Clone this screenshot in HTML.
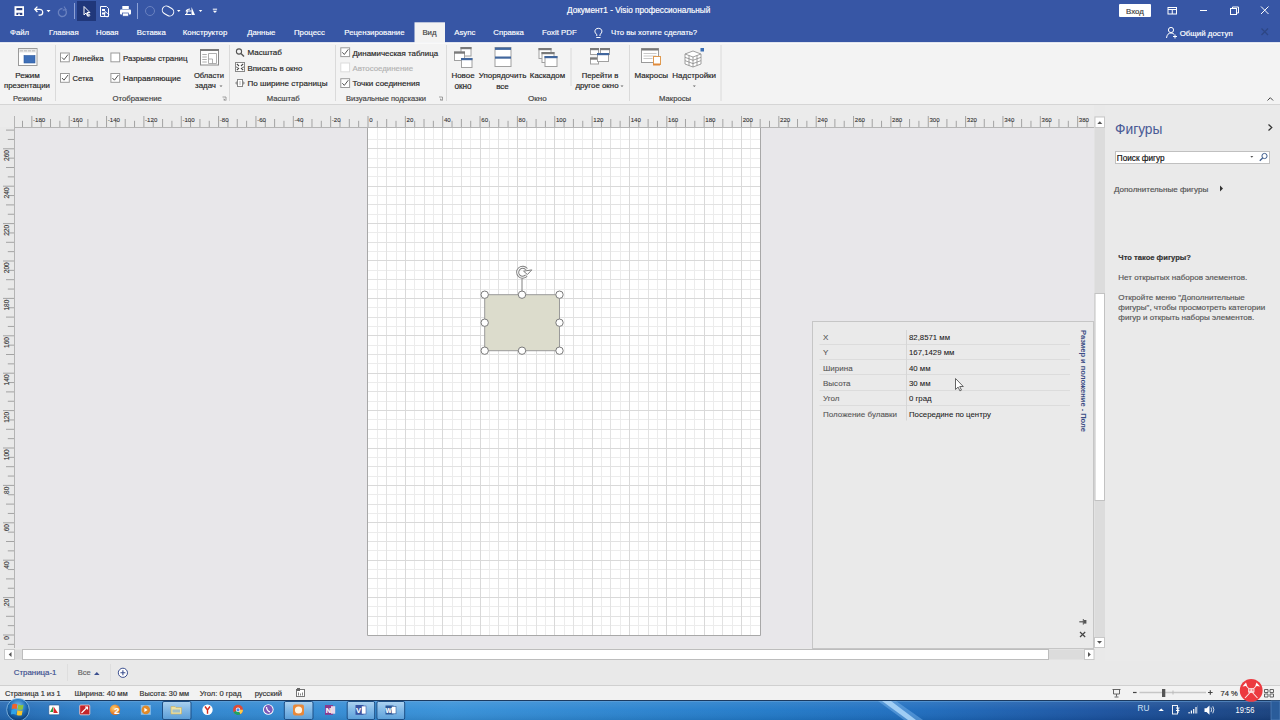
<!DOCTYPE html>
<html><head><meta charset="utf-8"><title>Visio</title>
<style>
html,body{margin:0;padding:0;width:1280px;height:720px;overflow:hidden;background:#e9e9e9;}
svg{display:block;font-family:"Liberation Sans", sans-serif;}
</style></head><body>
<svg width="1280" height="720" viewBox="0 0 1280 720">
<rect x="0" y="0" width="1280" height="42.5" fill="#3756a5" />
<rect x="414.5" y="22.3" width="30.5" height="20.5" fill="#f3f3f3" />
<rect x="0" y="42.5" width="1280" height="62" fill="#f3f3f3" />
<line x1="0" y1="104.5" x2="1280" y2="104.5" stroke="#d5d5d5" stroke-width="1" />
<rect x="0" y="105" width="1280" height="615" fill="#e9e9e9" />
<path d="M14.5 6.2 h9.5 v9.8 h-9.5 z" fill="#fff"/><rect x="16.4" y="8" width="5.9" height="2.2" fill="#2a3f80"/><rect x="16.4" y="12.8" width="5.9" height="2.2" fill="#2a3f80"/><rect x="18.2" y="13.6" width="1.6" height="1.4" fill="#fff"/>
<path d="M35 9.3 h4.8 a2.9 2.9 0 0 1 0 5.8 h-1.2" fill="none" stroke="#fff" stroke-width="1.3"/><path d="M37.4 6.6 l-2.6 2.7 2.6 2.7" fill="none" stroke="#fff" stroke-width="1.3"/><path d="M46.5 10 h4 l-2 2.2z" fill="#fff"/>
<path d="M62.5 8.5 a4 4 0 1 0 3 1.5" fill="none" stroke="#6a82c0" stroke-width="1.3"/><path d="M64 6.5 l2 3 -3.2 0.6" fill="none" stroke="#6a82c0" stroke-width="1.1"/>
<line x1="74.5" y1="3" x2="74.5" y2="19" stroke="#8ea2d6" stroke-width="1" />
<rect x="77" y="1" width="19" height="20" fill="#20377a" />
<path d="M84 6.5 v8.5 l2 -2 1.5 3 1 -.5 -1.4 -3 h2.8 z" fill="none" stroke="#fff" stroke-width="1"/><circle cx="88.6" cy="15.2" r="1.2" fill="none" stroke="#fff" stroke-width=".8"/>
<path d="M100.5 6.5 h6 l2 2 v8 h-8 z" fill="none" stroke="#fff" stroke-width="1"/><rect x="102" y="9" width="3" height="2" fill="#fff"/><rect x="102" y="12.5" width="3" height="2" fill="#fff"/><path d="M105 11.5 l4 3 -1.5 2.5 -3 -1z" fill="none" stroke="#fff" stroke-width=".9"/>
<rect x="122.3" y="6" width="6.5" height="3" fill="#fff"/><rect x="120" y="9.5" width="11" height="5" rx="1" fill="#fff"/><rect x="122.5" y="13" width="6" height="3.2" fill="#fff" stroke="#3756a5" stroke-width=".7"/>
<line x1="137.5" y1="3" x2="137.5" y2="19" stroke="#8ea2d6" stroke-width="1" />
<circle cx="150" cy="11" r="4.5" fill="none" stroke="#6a82c0" stroke-width="1"/>
<rect x="162" y="7" width="12" height="8" rx="4" transform="rotate(30 168 11)" fill="none" stroke="#fff" stroke-width="1"/><path d="M177 10 h3.5 l-1.75 2z" fill="#fff"/>
<path d="M191.5 7 l3.5 8 h-3.5z" fill="#fff"/><path d="M185 14.5 h6 M186.5 14.5 l1 -3.5 h4 M186 11.5 q1 -2.5 4 -2.5" fill="none" stroke="#fff" stroke-width="1.1"/><path d="M198.8 10 h3.5 l-1.75 2z" fill="#fff"/>
<path d="M212.8 9.2 h4.3" stroke="#fff" stroke-width="1"/><path d="M212.8 10.8 h4.3 l-2.15 2.2z" fill="#fff"/>
<text x="10" y="35.4" font-size="7.8" fill="#ffffff" text-anchor="start" font-weight="normal" stroke="#fff" stroke-width=".15">Файл</text>
<text x="49" y="35.4" font-size="7.8" fill="#ffffff" text-anchor="start" font-weight="normal" stroke="#fff" stroke-width=".15">Главная</text>
<text x="96" y="35.4" font-size="7.8" fill="#ffffff" text-anchor="start" font-weight="normal" stroke="#fff" stroke-width=".15">Новая</text>
<text x="136.8" y="35.4" font-size="7.8" fill="#ffffff" text-anchor="start" font-weight="normal" stroke="#fff" stroke-width=".15">Вставка</text>
<text x="182.8" y="35.4" font-size="7.8" fill="#ffffff" text-anchor="start" font-weight="normal" stroke="#fff" stroke-width=".15">Конструктор</text>
<text x="247.2" y="35.4" font-size="7.8" fill="#ffffff" text-anchor="start" font-weight="normal" stroke="#fff" stroke-width=".15">Данные</text>
<text x="294" y="35.4" font-size="7.8" fill="#ffffff" text-anchor="start" font-weight="normal" stroke="#fff" stroke-width=".15">Процесс</text>
<text x="344.3" y="35.4" font-size="7.8" fill="#ffffff" text-anchor="start" font-weight="normal" stroke="#fff" stroke-width=".15">Рецензирование</text>
<text x="454.2" y="35.4" font-size="7.8" fill="#ffffff" text-anchor="start" font-weight="normal" stroke="#fff" stroke-width=".15">Async</text>
<text x="493.3" y="35.4" font-size="7.8" fill="#ffffff" text-anchor="start" font-weight="normal" stroke="#fff" stroke-width=".15">Справка</text>
<text x="542" y="35.4" font-size="7.8" fill="#ffffff" text-anchor="start" font-weight="normal" stroke="#fff" stroke-width=".15">Foxit PDF</text>
<text x="611" y="35.4" font-size="7.8" fill="#ffffff" text-anchor="start" font-weight="normal" stroke="#fff" stroke-width=".15">Что вы хотите сделать?</text>
<text x="422.4" y="35.4" font-size="7.8" fill="#444444" text-anchor="start" font-weight="normal"  stroke="#444444" stroke-width="0.18">Вид</text>
<path d="M596.3 37.5 h4.2 M596.8 36 v-1.5 c-2.5 -1.5 -3 -6 1.6 -6.2 c4.6 .2 4.1 4.7 1.6 6.2 v1.5" fill="none" stroke="#fff" stroke-width="1"/>
<text x="567" y="13.2" font-size="8.2" fill="#ffffff" text-anchor="start" font-weight="normal"  stroke="#ffffff" stroke-width="0.18">Документ1  -  Visio профессиональный</text>
<rect x="1119" y="4" width="32" height="13" rx="1" fill="#fff"/>
<text x="1135" y="13.8" font-size="7.9" fill="#404040" text-anchor="middle" font-weight="normal"  stroke="#404040" stroke-width="0.18">Вход</text>
<rect x="1168" y="7.5" width="8.5" height="6.5" fill="none" stroke="#fff" stroke-width="1"/><path d="M1168 9.5 h8.5 M1172.25 9.5 v4.5" stroke="#fff" stroke-width="1"/>
<line x1="1200" y1="10.5" x2="1207" y2="10.5" stroke="#fff" stroke-width="1" />
<rect x="1230.5" y="8.5" width="6" height="6" fill="none" stroke="#fff" stroke-width="1"/><path d="M1232.5 8.5 v-1.5 h6 v6 h-1.8" fill="none" stroke="#fff" stroke-width="1"/>
<path d="M1261 6.5 l7.5 7.5 M1268.5 6.5 l-7.5 7.5" stroke="#fff" stroke-width="1"/>
<circle cx="1171" cy="30" r="2.6" fill="none" stroke="#fff" stroke-width="1"/><path d="M1166.5 38 c.5 -3.5 2 -5 4.5 -5 c1.5 0 2.5 .5 3.2 1.4" fill="none" stroke="#fff" stroke-width="1"/><path d="M1175 34.5 v4 M1173 36.5 h4" stroke="#fff" stroke-width="1"/>
<text x="1179.7" y="36" font-size="7.9" fill="#ffffff" text-anchor="start" font-weight="normal"  stroke="#ffffff" stroke-width="0.18">Общий доступ</text>
<path d="M1261.5 28.5 l6.5 6.5 M1268 28.5 l-6.5 6.5" stroke="#2d4684" stroke-width="1.2"/>
<line x1="0" y1="43" x2="1280" y2="43" stroke="#ffffff" stroke-width="1" />
<line x1="55.5" y1="45" x2="55.5" y2="101" stroke="#dadada" stroke-width="1"/>
<line x1="229.5" y1="45" x2="229.5" y2="101" stroke="#dadada" stroke-width="1"/>
<line x1="335.5" y1="45" x2="335.5" y2="101" stroke="#dadada" stroke-width="1"/>
<line x1="446.5" y1="45" x2="446.5" y2="101" stroke="#dadada" stroke-width="1"/>
<line x1="571" y1="48" x2="571" y2="86" stroke="#dadada" stroke-width="1"/>
<line x1="629.5" y1="45" x2="629.5" y2="101" stroke="#dadada" stroke-width="1"/>
<line x1="721" y1="45" x2="721" y2="101" stroke="#dadada" stroke-width="1"/>
<text x="13" y="101" font-size="7.63" fill="#444444" text-anchor="start" font-weight="normal"  stroke="#444444" stroke-width="0.18">Режимы</text>
<text x="112.6" y="101" font-size="7.74" fill="#444444" text-anchor="start" font-weight="normal"  stroke="#444444" stroke-width="0.18">Отображение</text>
<text x="266.7" y="101" font-size="7.7" fill="#444444" text-anchor="start" font-weight="normal"  stroke="#444444" stroke-width="0.18">Масштаб</text>
<text x="346" y="101" font-size="7.6" fill="#444444" text-anchor="start" font-weight="normal"  stroke="#444444" stroke-width="0.18">Визуальные подсказки</text>
<text x="528" y="101" font-size="8.1" fill="#444444" text-anchor="start" font-weight="normal"  stroke="#444444" stroke-width="0.18">Окно</text>
<text x="659" y="101" font-size="7.7" fill="#444444" text-anchor="start" font-weight="normal"  stroke="#444444" stroke-width="0.18">Макросы</text>
<path d="M222.5 97 h3.5 v3.5" fill="none" stroke="#888" stroke-width=".8"/><path d="M223.7 98.2 l2.3 2.3 h-2.3z" fill="#888"/>
<path d="M439 97 h3.5 v3.5" fill="none" stroke="#888" stroke-width=".8"/><path d="M440.2 98.2 l2.3 2.3 h-2.3z" fill="#888"/>
<rect x="18.5" y="48.5" width="18.5" height="17" fill="#fff" stroke="#9a9a9a" stroke-width="1"/><rect x="19" y="49" width="17.5" height="3.5" fill="#e8e8e8"/><rect x="24" y="55.5" width="11" height="7.5" fill="#3e6fb8" stroke="#2d5a9e" stroke-width=".6"/><path d="M20 50.7 h15" stroke="#c8c8c8" stroke-width="1.5" stroke-dasharray="3 1"/>
<text x="27.5" y="78" font-size="8.0" fill="#262626" text-anchor="middle" font-weight="normal"  stroke="#262626" stroke-width="0.18">Режим</text>
<text x="27" y="88.3" font-size="7.82" fill="#262626" text-anchor="middle" font-weight="normal"  stroke="#262626" stroke-width="0.18">презентации</text>
<rect x="60.5" y="53.0" width="8.8" height="8.8" fill="#fff" stroke="#9a9a9a" stroke-width="1"/>
<path d="M62 57.5 l2 2.2 l4 -5.2" fill="none" stroke="#555" stroke-width="1"/>
<text x="72.5" y="60.5" font-size="8.0" fill="#262626" text-anchor="start" font-weight="normal"  stroke="#262626" stroke-width="0.18">Линейка</text>
<rect x="60.5" y="73.5" width="8.8" height="8.8" fill="#fff" stroke="#9a9a9a" stroke-width="1"/>
<path d="M62 78 l2 2.2 l4 -5.2" fill="none" stroke="#555" stroke-width="1"/>
<text x="72.5" y="80.8" font-size="7.6" fill="#262626" text-anchor="start" font-weight="normal"  stroke="#262626" stroke-width="0.18">Сетка</text>
<rect x="110.9" y="53.0" width="8.8" height="8.8" fill="#fff" stroke="#9a9a9a" stroke-width="1"/>
<text x="123" y="60.5" font-size="7.87" fill="#262626" text-anchor="start" font-weight="normal"  stroke="#262626" stroke-width="0.18">Разрывы страниц</text>
<rect x="110.9" y="73.5" width="8.8" height="8.8" fill="#fff" stroke="#9a9a9a" stroke-width="1"/>
<path d="M112.4 78 l2 2.2 l4 -5.2" fill="none" stroke="#555" stroke-width="1"/>
<text x="123" y="80.8" font-size="8.0" fill="#262626" text-anchor="start" font-weight="normal"  stroke="#262626" stroke-width="0.18">Направляющие</text>
<rect x="200.5" y="49.5" width="18" height="15.5" fill="#fff" stroke="#8a8a8a" stroke-width="1"/><rect x="200" y="49" width="19" height="2" fill="#7a7a7a"/><path d="M202.3 54.5 h4.5 M202.3 57 h4.5 M202.3 59.5 h4.5 M202.3 62 h4.5" stroke="#9a9a9a" stroke-width=".8"/><path d="M208.5 53.5 h8 v10 h-8 z M208.5 59 h4 v4.5" fill="none" stroke="#9a9a9a" stroke-width=".8"/>
<text x="209" y="77.8" font-size="7.6" fill="#262626" text-anchor="middle" font-weight="normal"  stroke="#262626" stroke-width="0.18">Области</text>
<text x="205.5" y="88" font-size="7.9" fill="#262626" text-anchor="middle" font-weight="normal"  stroke="#262626" stroke-width="0.18">задач</text>
<path d="M219.5 85.5 h3 l-1.5 1.6z" fill="#666"/>
<circle cx="239" cy="51.5" r="2.6" fill="none" stroke="#555" stroke-width="1.1"/><path d="M241 53.5 l3 3" stroke="#555" stroke-width="1.4"/>
<text x="247.5" y="54.9" font-size="8.05" fill="#262626" text-anchor="start" font-weight="normal"  stroke="#262626" stroke-width="0.18">Масштаб</text>
<rect x="235.5" y="62.5" width="9" height="9" fill="#fff" stroke="#888" stroke-width="1"/><path d="M236.8 63.8 l2.2 2.2 M243.2 63.8 l-2.2 2.2 M236.8 70.2 l2.2 -2.2 M243.2 70.2 l-2.2 -2.2" stroke="#444" stroke-width="1.1"/><path d="M236.5 66 v2 h1.5z M243.5 66 v2 h-1.5z" fill="#444"/>
<text x="247.5" y="71" font-size="7.86" fill="#262626" text-anchor="start" font-weight="normal"  stroke="#262626" stroke-width="0.18">Вписать в окно</text>
<rect x="237.5" y="79.5" width="5" height="7" fill="#fff" stroke="#888" stroke-width="1"/><path d="M235 83 l2 -2 v4z M245 83 l-2 -2 v4z" fill="#999"/><path d="M239 82 h2 M239 84 h2" stroke="#999" stroke-width=".7"/>
<text x="247.5" y="86.4" font-size="8.1" fill="#262626" text-anchor="start" font-weight="normal"  stroke="#262626" stroke-width="0.18">По ширине страницы</text>
<rect x="340.8" y="47.8" width="8.8" height="8.8" fill="#fff" stroke="#9a9a9a" stroke-width="1"/>
<path d="M342.3 52.3 l2 2.2 l4 -5.2" fill="none" stroke="#555" stroke-width="1"/>
<text x="352.5" y="55.5" font-size="7.93" fill="#262626" text-anchor="start" font-weight="normal"  stroke="#262626" stroke-width="0.18">Динамическая таблица</text>
<rect x="340.8" y="63.0" width="8.8" height="8.8" fill="#fff" stroke="#dcdcdc" stroke-width="1"/>
<text x="352.5" y="71" font-size="7.86" fill="#b4b4b4" text-anchor="start" font-weight="normal"  stroke="#b4b4b4" stroke-width="0.18">Автосоединение</text>
<rect x="340.8" y="78.7" width="8.8" height="8.8" fill="#fff" stroke="#9a9a9a" stroke-width="1"/>
<path d="M342.3 83.2 l2 2.2 l4 -5.2" fill="none" stroke="#555" stroke-width="1"/>
<text x="352.5" y="86.2" font-size="8.05" fill="#262626" text-anchor="start" font-weight="normal"  stroke="#262626" stroke-width="0.18">Точки соединения</text>
<rect x="461.0" y="47.5" width="10" height="8.5" fill="#fff" stroke="#a0a0a0" stroke-width="1"/><rect x="460.5" y="47" width="11" height="2.2" fill="#7a7a7a"/>
<rect x="454.5" y="52.0" width="10" height="8.5" fill="#fff" stroke="#a0a0a0" stroke-width="1"/><rect x="454" y="51.5" width="11" height="2.2" fill="#7a7a7a"/>
<rect x="461.5" y="58.5" width="10.5" height="9" fill="#fff" stroke="#a0a0a0" stroke-width="1"/><rect x="461" y="58" width="11.5" height="2.2" fill="#41679e"/>
<text x="463" y="78" font-size="7.97" fill="#262626" text-anchor="middle" font-weight="normal"  stroke="#262626" stroke-width="0.18">Новое</text>
<text x="463" y="88.5" font-size="8.2" fill="#262626" text-anchor="middle" font-weight="normal"  stroke="#262626" stroke-width="0.18">окно</text>
<rect x="495" y="47.5" width="16" height="19" fill="#fff" stroke="#a0a0a0" stroke-width="1"/><rect x="495" y="47.5" width="16" height="2.4" fill="#41679e"/><rect x="495" y="56.5" width="16" height="2.2" fill="#41679e"/>
<text x="502.5" y="78" font-size="8.0" fill="#262626" text-anchor="middle" font-weight="normal"  stroke="#262626" stroke-width="0.18">Упорядочить</text>
<text x="502.5" y="88.5" font-size="8.0" fill="#262626" text-anchor="middle" font-weight="normal"  stroke="#262626" stroke-width="0.18">все</text>
<rect x="539.0" y="48.5" width="12" height="10" fill="#fff" stroke="#a0a0a0" stroke-width="1"/><rect x="538.5" y="48" width="13" height="2.2" fill="#7a7a7a"/>
<rect x="542.0" y="52.5" width="12" height="10" fill="#fff" stroke="#a0a0a0" stroke-width="1"/><rect x="541.5" y="52" width="13" height="2.2" fill="#7a7a7a"/>
<rect x="545.0" y="56.5" width="12" height="10" fill="#fff" stroke="#a0a0a0" stroke-width="1"/><rect x="544.5" y="56" width="13" height="2.2" fill="#41679e"/>
<text x="547.5" y="78" font-size="7.9" fill="#262626" text-anchor="middle" font-weight="normal"  stroke="#262626" stroke-width="0.18">Каскадом</text>
<rect x="590.5" y="48.5" width="8" height="6" fill="#fff" stroke="#a0a0a0" stroke-width="1"/><rect x="590" y="48" width="9" height="2.2" fill="#7a7a7a"/>
<rect x="600.5" y="48.5" width="9" height="6" fill="#fff" stroke="#a0a0a0" stroke-width="1"/><rect x="600" y="48" width="10" height="2.2" fill="#7a7a7a"/>
<rect x="590.5" y="58.0" width="8" height="6" fill="#fff" stroke="#a0a0a0" stroke-width="1"/><rect x="590" y="57.5" width="9" height="2.2" fill="#7a7a7a"/>
<rect x="597.5" y="53.5" width="11" height="8" fill="#fff" stroke="#a0a0a0" stroke-width="1"/><rect x="597" y="53" width="12" height="2.2" fill="#41679e"/>
<text x="600" y="77.8" font-size="7.7" fill="#262626" text-anchor="middle" font-weight="normal"  stroke="#262626" stroke-width="0.18">Перейти в</text>
<text x="597" y="88" font-size="7.9" fill="#262626" text-anchor="middle" font-weight="normal"  stroke="#262626" stroke-width="0.18">другое окно</text>
<path d="M620.5 85.5 h3 l-1.5 1.6z" fill="#666"/>
<rect x="641.5" y="48.5" width="17" height="14" fill="#fff" stroke="#9a9a9a" stroke-width="1"/><rect x="641.5" y="48.5" width="17" height="2" fill="#777"/><path d="M643.5 53.5 h13 M643.5 56 h13 M643.5 58.5 h9" stroke="#bbb" stroke-width=".8"/><rect x="653.5" y="56.5" width="7" height="8" fill="#fff" stroke="#e09a50" stroke-width="1"/><rect x="653" y="63.5" width="7" height="2" fill="#e08a3a"/>
<text x="651.2" y="78" font-size="8.05" fill="#262626" text-anchor="middle" font-weight="normal"  stroke="#262626" stroke-width="0.18">Макросы</text>
<g fill="#fff" stroke="#888" stroke-width=".8"><path d="M685 54 l8 -3 l8 3 v10 l-8 3 l-8 -3 z"/><path d="M685 54 l8 3 l8 -3 M693 57 v10 M685 57.3 l8 3 8 -3 M685 60.6 l8 3 8 -3 M689 55.5 v10 M697 55.5 v10"/></g><rect x="700.5" y="48" width="3.5" height="3.5" fill="#3c6fb4"/>
<text x="694.2" y="78" font-size="7.98" fill="#262626" text-anchor="middle" font-weight="normal"  stroke="#262626" stroke-width="0.18">Надстройки</text>
<path d="M692.8 85.5 h3 l-1.5 1.6z" fill="#666"/>
<path d="M1267.5 100.5 l2.8 -2.8 2.8 2.8" fill="none" stroke="#444" stroke-width="1"/>
<rect x="14.5" y="127.5" width="1080" height="521" fill="#e8e7ea" />
<rect x="368" y="127" width="392" height="508" fill="#ffffff"/>
<path d="M377.5 127V635 M396.5 127V635 M414.5 127V635 M433.5 127V635 M452.5 127V635 M470.5 127V635 M489.5 127V635 M508.5 127V635 M526.5 127V635 M545.5 127V635 M564.5 127V635 M582.5 127V635 M601.5 127V635 M620.5 127V635 M638.5 127V635 M657.5 127V635 M676.5 127V635 M694.5 127V635 M713.5 127V635 M732.5 127V635 M750.5 127V635 M368 625.5H760 M368 606.5H760 M368 588.5H760 M368 569.5H760 M368 550.5H760 M368 532.5H760 M368 513.5H760 M368 494.5H760 M368 476.5H760 M368 457.5H760 M368 438.5H760 M368 419.5H760 M368 401.5H760 M368 382.5H760 M368 363.5H760 M368 345.5H760 M368 326.5H760 M368 307.5H760 M368 289.5H760 M368 270.5H760 M368 251.5H760 M368 232.5H760 M368 214.5H760 M368 195.5H760 M368 176.5H760 M368 158.5H760 M368 139.5H760" stroke="#ececec" stroke-width="1" fill="none"/>
<path d="M386.5 127V635 M424.5 127V635 M461.5 127V635 M498.5 127V635 M536.5 127V635 M573.5 127V635 M610.5 127V635 M648.5 127V635 M685.5 127V635 M722.5 127V635 M368 616.5H760 M368 578.5H760 M368 541.5H760 M368 504.5H760 M368 466.5H760 M368 429.5H760 M368 391.5H760 M368 354.5H760 M368 317.5H760 M368 279.5H760 M368 242.5H760 M368 204.5H760 M368 167.5H760" stroke="#e2e2e2" stroke-width="1" fill="none"/>
<path d="M405.5 127V635 M442.5 127V635 M480.5 127V635 M517.5 127V635 M554.5 127V635 M592.5 127V635 M629.5 127V635 M666.5 127V635 M704.5 127V635 M741.5 127V635 M368 597.5H760 M368 560.5H760 M368 522.5H760 M368 485.5H760 M368 448.5H760 M368 410.5H760 M368 373.5H760 M368 335.5H760 M368 298.5H760 M368 260.5H760 M368 223.5H760 M368 186.5H760 M368 148.5H760" stroke="#d9d9d9" stroke-width="1" fill="none"/>
<path d="M367.5 127 V635.5 H760.5 V127" fill="none" stroke="#a8a8a8" stroke-width="1"/>
<rect x="0" y="105" width="1094" height="22" fill="#ebebeb" />
<line x1="14" y1="127.5" x2="1094" y2="127.5" stroke="#b4b4b4" stroke-width="1" />
<path d="M22.51 120.8V127 M31.85 116V127 M41.19 120.8V127 M50.53 119V127 M59.86 120.8V127 M69.20 116V127 M78.54 120.8V127 M87.88 119V127 M97.21 120.8V127 M106.55 116V127 M115.89 120.8V127 M125.22 119V127 M134.56 120.8V127 M143.90 116V127 M153.24 120.8V127 M162.58 119V127 M171.91 120.8V127 M181.25 116V127 M190.59 120.8V127 M199.93 119V127 M209.26 120.8V127 M218.60 116V127 M227.94 120.8V127 M237.28 119V127 M246.61 120.8V127 M255.95 116V127 M265.29 120.8V127 M274.62 119V127 M283.96 120.8V127 M293.30 116V127 M302.64 120.8V127 M311.98 119V127 M321.31 120.8V127 M330.65 116V127 M339.99 120.8V127 M349.32 119V127 M358.66 120.8V127 M368.00 116V127 M377.34 120.8V127 M386.68 119V127 M396.01 120.8V127 M405.35 116V127 M414.69 120.8V127 M424.02 119V127 M433.36 120.8V127 M442.70 116V127 M452.04 120.8V127 M461.38 119V127 M470.71 120.8V127 M480.05 116V127 M489.39 120.8V127 M498.73 119V127 M508.06 120.8V127 M517.40 116V127 M526.74 120.8V127 M536.08 119V127 M545.41 120.8V127 M554.75 116V127 M564.09 120.8V127 M573.42 119V127 M582.76 120.8V127 M592.10 116V127 M601.44 120.8V127 M610.77 119V127 M620.11 120.8V127 M629.45 116V127 M638.79 120.8V127 M648.12 119V127 M657.46 120.8V127 M666.80 116V127 M676.14 120.8V127 M685.47 119V127 M694.81 120.8V127 M704.15 116V127 M713.49 120.8V127 M722.83 119V127 M732.16 120.8V127 M741.50 116V127 M750.84 120.8V127 M760.17 119V127 M769.51 120.8V127 M778.85 116V127 M788.19 120.8V127 M797.52 119V127 M806.86 120.8V127 M816.20 116V127 M825.54 120.8V127 M834.88 119V127 M844.21 120.8V127 M853.55 116V127 M862.89 120.8V127 M872.22 119V127 M881.56 120.8V127 M890.90 116V127 M900.24 120.8V127 M909.57 119V127 M918.91 120.8V127 M928.25 116V127 M937.59 120.8V127 M946.92 119V127 M956.26 120.8V127 M965.60 116V127 M974.94 120.8V127 M984.27 119V127 M993.61 120.8V127 M1002.95 116V127 M1012.29 120.8V127 M1021.62 119V127 M1030.96 120.8V127 M1040.30 116V127 M1049.64 120.8V127 M1058.97 119V127 M1068.31 120.8V127 M1077.65 116V127 M1086.99 120.8V127" stroke="#a3a3a3" stroke-width="1" fill="none"/>
<text x="33.05" y="121.9" font-size="6.1" fill="#333333" text-anchor="start" font-weight="normal"  stroke="#333333" stroke-width="0.1">-180</text>
<text x="70.4" y="121.9" font-size="6.1" fill="#333333" text-anchor="start" font-weight="normal"  stroke="#333333" stroke-width="0.1">-160</text>
<text x="107.75" y="121.9" font-size="6.1" fill="#333333" text-anchor="start" font-weight="normal"  stroke="#333333" stroke-width="0.1">-140</text>
<text x="145.1" y="121.9" font-size="6.1" fill="#333333" text-anchor="start" font-weight="normal"  stroke="#333333" stroke-width="0.1">-120</text>
<text x="182.45" y="121.9" font-size="6.1" fill="#333333" text-anchor="start" font-weight="normal"  stroke="#333333" stroke-width="0.1">-100</text>
<text x="219.8" y="121.9" font-size="6.1" fill="#333333" text-anchor="start" font-weight="normal"  stroke="#333333" stroke-width="0.1">-80</text>
<text x="257.15" y="121.9" font-size="6.1" fill="#333333" text-anchor="start" font-weight="normal"  stroke="#333333" stroke-width="0.1">-60</text>
<text x="294.5" y="121.9" font-size="6.1" fill="#333333" text-anchor="start" font-weight="normal"  stroke="#333333" stroke-width="0.1">-40</text>
<text x="331.85" y="121.9" font-size="6.1" fill="#333333" text-anchor="start" font-weight="normal"  stroke="#333333" stroke-width="0.1">-20</text>
<text x="369.2" y="121.9" font-size="6.1" fill="#333333" text-anchor="start" font-weight="normal"  stroke="#333333" stroke-width="0.1">0</text>
<text x="406.55" y="121.9" font-size="6.1" fill="#333333" text-anchor="start" font-weight="normal"  stroke="#333333" stroke-width="0.1">20</text>
<text x="443.9" y="121.9" font-size="6.1" fill="#333333" text-anchor="start" font-weight="normal"  stroke="#333333" stroke-width="0.1">40</text>
<text x="481.25" y="121.9" font-size="6.1" fill="#333333" text-anchor="start" font-weight="normal"  stroke="#333333" stroke-width="0.1">60</text>
<text x="518.6" y="121.9" font-size="6.1" fill="#333333" text-anchor="start" font-weight="normal"  stroke="#333333" stroke-width="0.1">80</text>
<text x="555.95" y="121.9" font-size="6.1" fill="#333333" text-anchor="start" font-weight="normal"  stroke="#333333" stroke-width="0.1">100</text>
<text x="593.3" y="121.9" font-size="6.1" fill="#333333" text-anchor="start" font-weight="normal"  stroke="#333333" stroke-width="0.1">120</text>
<text x="630.65" y="121.9" font-size="6.1" fill="#333333" text-anchor="start" font-weight="normal"  stroke="#333333" stroke-width="0.1">140</text>
<text x="668.0" y="121.9" font-size="6.1" fill="#333333" text-anchor="start" font-weight="normal"  stroke="#333333" stroke-width="0.1">160</text>
<text x="705.35" y="121.9" font-size="6.1" fill="#333333" text-anchor="start" font-weight="normal"  stroke="#333333" stroke-width="0.1">180</text>
<text x="742.7" y="121.9" font-size="6.1" fill="#333333" text-anchor="start" font-weight="normal"  stroke="#333333" stroke-width="0.1">200</text>
<text x="780.05" y="121.9" font-size="6.1" fill="#333333" text-anchor="start" font-weight="normal"  stroke="#333333" stroke-width="0.1">220</text>
<text x="817.4" y="121.9" font-size="6.1" fill="#333333" text-anchor="start" font-weight="normal"  stroke="#333333" stroke-width="0.1">240</text>
<text x="854.75" y="121.9" font-size="6.1" fill="#333333" text-anchor="start" font-weight="normal"  stroke="#333333" stroke-width="0.1">260</text>
<text x="892.1" y="121.9" font-size="6.1" fill="#333333" text-anchor="start" font-weight="normal"  stroke="#333333" stroke-width="0.1">280</text>
<text x="929.45" y="121.9" font-size="6.1" fill="#333333" text-anchor="start" font-weight="normal"  stroke="#333333" stroke-width="0.1">300</text>
<text x="966.8" y="121.9" font-size="6.1" fill="#333333" text-anchor="start" font-weight="normal"  stroke="#333333" stroke-width="0.1">320</text>
<text x="1004.15" y="121.9" font-size="6.1" fill="#333333" text-anchor="start" font-weight="normal"  stroke="#333333" stroke-width="0.1">340</text>
<text x="1041.5" y="121.9" font-size="6.1" fill="#333333" text-anchor="start" font-weight="normal"  stroke="#333333" stroke-width="0.1">360</text>
<text x="1078.85" y="121.9" font-size="6.1" fill="#333333" text-anchor="start" font-weight="normal"  stroke="#333333" stroke-width="0.1">380</text>
<line x1="14.5" y1="116" x2="14.5" y2="648" stroke="#b4b4b4" stroke-width="1" />
<path d="M7.8 644.35H14 M3 635.00H14 M7.8 625.65H14 M6 616.30H14 M7.8 606.95H14 M3 597.60H14 M7.8 588.25H14 M6 578.90H14 M7.8 569.55H14 M3 560.20H14 M7.8 550.85H14 M6 541.50H14 M7.8 532.15H14 M3 522.80H14 M7.8 513.45H14 M6 504.10H14 M7.8 494.75H14 M3 485.40H14 M7.8 476.05H14 M6 466.70H14 M7.8 457.35H14 M3 448.00H14 M7.8 438.65H14 M6 429.30H14 M7.8 419.95H14 M3 410.60H14 M7.8 401.25H14 M6 391.90H14 M7.8 382.55H14 M3 373.20H14 M7.8 363.85H14 M6 354.50H14 M7.8 345.15H14 M3 335.80H14 M7.8 326.45H14 M6 317.10H14 M7.8 307.75H14 M3 298.40H14 M7.8 289.05H14 M6 279.70H14 M7.8 270.35H14 M3 261.00H14 M7.8 251.65H14 M6 242.30H14 M7.8 232.95H14 M3 223.60H14 M7.8 214.25H14 M6 204.90H14 M7.8 195.55H14 M3 186.20H14 M7.8 176.85H14 M6 167.50H14 M7.8 158.15H14 M3 148.80H14 M7.8 139.45H14 M6 130.10H14" stroke="#a3a3a3" stroke-width="1" fill="none"/>
<text transform="translate(9.3 636.20) rotate(-90)" text-anchor="end" font-size="6.6" fill="#333" stroke="#333" stroke-width=".1">0</text>
<text transform="translate(9.3 598.80) rotate(-90)" text-anchor="end" font-size="6.6" fill="#333" stroke="#333" stroke-width=".1">20</text>
<text transform="translate(9.3 561.40) rotate(-90)" text-anchor="end" font-size="6.6" fill="#333" stroke="#333" stroke-width=".1">40</text>
<text transform="translate(9.3 524.00) rotate(-90)" text-anchor="end" font-size="6.6" fill="#333" stroke="#333" stroke-width=".1">60</text>
<text transform="translate(9.3 486.60) rotate(-90)" text-anchor="end" font-size="6.6" fill="#333" stroke="#333" stroke-width=".1">80</text>
<text transform="translate(9.3 449.20) rotate(-90)" text-anchor="end" font-size="6.6" fill="#333" stroke="#333" stroke-width=".1">100</text>
<text transform="translate(9.3 411.80) rotate(-90)" text-anchor="end" font-size="6.6" fill="#333" stroke="#333" stroke-width=".1">120</text>
<text transform="translate(9.3 374.40) rotate(-90)" text-anchor="end" font-size="6.6" fill="#333" stroke="#333" stroke-width=".1">140</text>
<text transform="translate(9.3 337.00) rotate(-90)" text-anchor="end" font-size="6.6" fill="#333" stroke="#333" stroke-width=".1">160</text>
<text transform="translate(9.3 299.60) rotate(-90)" text-anchor="end" font-size="6.6" fill="#333" stroke="#333" stroke-width=".1">180</text>
<text transform="translate(9.3 262.20) rotate(-90)" text-anchor="end" font-size="6.6" fill="#333" stroke="#333" stroke-width=".1">200</text>
<text transform="translate(9.3 224.80) rotate(-90)" text-anchor="end" font-size="6.6" fill="#333" stroke="#333" stroke-width=".1">220</text>
<text transform="translate(9.3 187.40) rotate(-90)" text-anchor="end" font-size="6.6" fill="#333" stroke="#333" stroke-width=".1">240</text>
<text transform="translate(9.3 150.00) rotate(-90)" text-anchor="end" font-size="6.6" fill="#333" stroke="#333" stroke-width=".1">260</text>
<rect x="0" y="105" width="14" height="22" fill="#ebebeb" />
<rect x="484.7" y="294.7" width="74.8" height="56" fill="#dcdccc" stroke="#9a9a9a" stroke-width="1"/>
<line x1="522" y1="278.5" x2="522" y2="294.7" stroke="#808080" stroke-width="1" />
<circle cx="484.7" cy="294.7" r="3.7" fill="#fff" stroke="#7a7a7a" stroke-width="1"/>
<circle cx="522" cy="294.7" r="3.7" fill="#fff" stroke="#7a7a7a" stroke-width="1"/>
<circle cx="559.5" cy="294.7" r="3.7" fill="#fff" stroke="#7a7a7a" stroke-width="1"/>
<circle cx="484.7" cy="322.7" r="3.7" fill="#fff" stroke="#7a7a7a" stroke-width="1"/>
<circle cx="559.5" cy="322.7" r="3.7" fill="#fff" stroke="#7a7a7a" stroke-width="1"/>
<circle cx="484.7" cy="350.7" r="3.7" fill="#fff" stroke="#7a7a7a" stroke-width="1"/>
<circle cx="522" cy="350.7" r="3.7" fill="#fff" stroke="#7a7a7a" stroke-width="1"/>
<circle cx="559.5" cy="350.7" r="3.7" fill="#fff" stroke="#7a7a7a" stroke-width="1"/>
<path d="M526.4 275.6 A5 5 0 1 1 526.6 269.2" fill="none" stroke="#7c7c7c" stroke-width="3"/><path d="M526.4 275.6 A5 5 0 1 1 526.6 269.2" fill="none" stroke="#ffffff" stroke-width="1.1"/><path d="M523.6 271.2 l8.2 -1.3 -4.4 4.6z" fill="#fff" stroke="#7c7c7c" stroke-width="1"/>
<rect x="1094.5" y="116.5" width="10.5" height="531.5" fill="#dcdcdc" />
<rect x="1095" y="117" width="9.5" height="10.5" fill="#fff" stroke="#c8c8c8" stroke-width="1"/><path d="M1097.3 124 l2.5 -2.8 2.5 2.8z" fill="#555"/>
<rect x="1095" y="293.5" width="9.5" height="207" fill="#fff" stroke="#c2c2c2" stroke-width="1"/>
<rect x="1094.5" y="637.5" width="10" height="10" fill="#fff" stroke="#c8c8c8" stroke-width="1"/><path d="M1097 641 l2.5 2.8 2.5 -2.8z" fill="#555"/>
<rect x="0" y="648" width="1105" height="12.5" fill="#e9e9e9" />
<rect x="14.5" y="649.5" width="1070" height="10" fill="#dcdcdc" />
<rect x="4.5" y="649.5" width="10" height="10" fill="#fff" stroke="#c8c8c8" stroke-width="1"/><path d="M11.5 652 l-2.8 2.5 2.8 2.5z" fill="#555"/>
<rect x="22.5" y="649.5" width="1026" height="10" fill="#fff" stroke="#bdbdbd" stroke-width="1"/>
<rect x="1084.5" y="649.5" width="9.5" height="10" fill="#fff" stroke="#c8c8c8" stroke-width="1"/><path d="M1088 652 l2.8 2.5 -2.8 2.5z" fill="#555"/>
<rect x="812.5" y="321.5" width="281" height="327" fill="#eaeaea" stroke="#c6c6c6" stroke-width="1"/>
<text x="823" y="339.9" font-size="8.0" fill="#555555" text-anchor="start" font-weight="normal"  stroke="#555555" stroke-width="0.1">X</text>
<text x="909" y="339.9" font-size="7.8" fill="#1a1a1a" text-anchor="start" font-weight="normal"  stroke="#1a1a1a" stroke-width="0.06">82,8571 мм</text>
<text x="823" y="355.25" font-size="8.0" fill="#555555" text-anchor="start" font-weight="normal"  stroke="#555555" stroke-width="0.1">Y</text>
<text x="909" y="355.25" font-size="7.8" fill="#1a1a1a" text-anchor="start" font-weight="normal"  stroke="#1a1a1a" stroke-width="0.06">167,1429 мм</text>
<text x="823" y="370.59999999999997" font-size="8.0" fill="#555555" text-anchor="start" font-weight="normal"  stroke="#555555" stroke-width="0.1">Ширина</text>
<text x="909" y="370.59999999999997" font-size="7.8" fill="#1a1a1a" text-anchor="start" font-weight="normal"  stroke="#1a1a1a" stroke-width="0.06">40 мм</text>
<text x="823" y="385.95" font-size="8.0" fill="#555555" text-anchor="start" font-weight="normal"  stroke="#555555" stroke-width="0.1">Высота</text>
<text x="909" y="385.95" font-size="7.8" fill="#1a1a1a" text-anchor="start" font-weight="normal"  stroke="#1a1a1a" stroke-width="0.06">30 мм</text>
<text x="823" y="401.29999999999995" font-size="8.0" fill="#555555" text-anchor="start" font-weight="normal"  stroke="#555555" stroke-width="0.1">Угол</text>
<text x="909" y="401.29999999999995" font-size="7.8" fill="#1a1a1a" text-anchor="start" font-weight="normal"  stroke="#1a1a1a" stroke-width="0.06">0 град</text>
<text x="823" y="416.65" font-size="8.0" fill="#555555" text-anchor="start" font-weight="normal"  stroke="#555555" stroke-width="0.1">Положение булавки</text>
<text x="909" y="416.65" font-size="7.8" fill="#1a1a1a" text-anchor="start" font-weight="normal"  stroke="#1a1a1a" stroke-width="0.06">Посередине по центру</text>
<line x1="819.5" y1="344.5" x2="1070" y2="344.5" stroke="#dcdcdc" stroke-width="1" />
<line x1="819.5" y1="359.5" x2="1070" y2="359.5" stroke="#dcdcdc" stroke-width="1" />
<line x1="819.5" y1="374.5" x2="1070" y2="374.5" stroke="#dcdcdc" stroke-width="1" />
<line x1="819.5" y1="390.5" x2="1070" y2="390.5" stroke="#dcdcdc" stroke-width="1" />
<line x1="819.5" y1="405.5" x2="1070" y2="405.5" stroke="#dcdcdc" stroke-width="1" />
<line x1="906.5" y1="330" x2="906.5" y2="420.5" stroke="#d6d6d6" stroke-width="1" />
<text transform="translate(1080.6 330) rotate(90)" font-size="7.5" font-weight="bold" fill="#3b4d85">Размер и положение - Поле</text>
<path d="M1079.3 621.8 h4.2" stroke="#555" stroke-width="1.2"/><path d="M1083.3 619 v5.6" stroke="#555" stroke-width="1"/><rect x="1083.8" y="620" width="2.6" height="3.6" fill="#555"/>
<path d="M1080 632 l5.2 5 M1085.2 632 l-5.2 5" stroke="#444" stroke-width="1.2"/>
<path d="M955.5 378.5 v11 l2.6 -2.4 1.8 3.8 1.6 -.8 -1.8 -3.6 h3.6 z" fill="#fff" stroke="#555" stroke-width=".9"/>
<rect x="1105" y="105" width="175" height="578" fill="#eaeaea" />
<text x="1115" y="134" font-size="13.75" fill="#4a5b96" text-anchor="start" font-weight="normal"  stroke="#4a5b96" stroke-width="0.05">Фигуры</text>
<path d="M1268.5 124.5 l3.3 3 -3.3 3" fill="none" stroke="#333" stroke-width="1.2"/>
<rect x="1115.5" y="151.5" width="154" height="12" fill="#fff" stroke="#c0c0c0" stroke-width="1"/>
<text x="1116.8" y="160.5" font-size="8.2" fill="#111" text-anchor="start" font-weight="normal"  stroke="#111" stroke-width="0.18">Поиск фигур</text>
<path d="M1250.3 156 h3 l-1.5 1.7z" fill="#555"/>
<circle cx="1264.5" cy="156" r="2.6" fill="none" stroke="#3f5e8e" stroke-width="1"/><path d="M1262.6 158 l-2.8 2.8" stroke="#3f5e8e" stroke-width="1.3"/>
<text x="1114" y="191.5" font-size="8.05" fill="#555" text-anchor="start" font-weight="normal"  stroke="#555" stroke-width="0.18">Дополнительные фигуры</text>
<path d="M1220 185.5 l3 3 -3 3z" fill="#333"/>
<text x="1118.3" y="260" font-size="7.6" fill="#333" text-anchor="start" font-weight="bold"  stroke="#333" stroke-width="0.18">Что такое фигуры?</text>
<text x="1118.3" y="280.3" font-size="8.05" fill="#595959" text-anchor="start" font-weight="normal"  stroke="#595959" stroke-width="0.18">Нет открытых наборов элементов.</text>
<text x="1118.3" y="300" font-size="8.05" fill="#595959" text-anchor="start" font-weight="normal"  stroke="#595959" stroke-width="0.18">Откройте меню &quot;Дополнительные</text>
<text x="1118.3" y="309.9" font-size="8.05" fill="#595959" text-anchor="start" font-weight="normal"  stroke="#595959" stroke-width="0.18">фигуры&quot;, чтобы просмотреть категории</text>
<text x="1118.3" y="319.8" font-size="8.05" fill="#595959" text-anchor="start" font-weight="normal"  stroke="#595959" stroke-width="0.18">фигур и открыть наборы элементов.</text>
<rect x="0" y="660.5" width="1280" height="24.5" fill="#e9e9e9" />
<text x="13.7" y="674.8" font-size="7.9" fill="#3b4f8f" text-anchor="start" font-weight="normal"  stroke="#3b4f8f" stroke-width="0.18">Страница-1</text>
<line x1="67.5" y1="664" x2="67.5" y2="681" stroke="#dedede" stroke-width="1" />
<text x="77.7" y="674.8" font-size="7.5" fill="#666" text-anchor="start" font-weight="normal"  stroke="#666" stroke-width="0.18">Все</text>
<path d="M94 675 l2.8 -3 2.8 3z" fill="#3b4f8f"/>
<line x1="110.5" y1="664" x2="110.5" y2="681" stroke="#dedede" stroke-width="1" />
<circle cx="122.9" cy="672.8" r="4.6" fill="#fff" stroke="#3b4f8f" stroke-width="1"/><path d="M120.4 672.8 h5 M122.9 670.3 v5" stroke="#3b4f8f" stroke-width="1.1"/>
<rect x="0" y="685" width="1280" height="15" fill="#f2f2f2" />
<line x1="0" y1="685.5" x2="1280" y2="685.5" stroke="#d0d0d0" stroke-width="1" />
<text x="4.9" y="695.6" font-size="7.45" fill="#333" text-anchor="start" font-weight="normal"  stroke="#333" stroke-width="0.18">Страница 1 из 1</text>
<text x="74.4" y="695.6" font-size="7.6" fill="#333" text-anchor="start" font-weight="normal"  stroke="#333" stroke-width="0.18">Ширина: 40 мм</text>
<text x="139.5" y="695.6" font-size="7.35" fill="#333" text-anchor="start" font-weight="normal"  stroke="#333" stroke-width="0.18">Высота: 30 мм</text>
<text x="199.7" y="695.6" font-size="7.6" fill="#333" text-anchor="start" font-weight="normal"  stroke="#333" stroke-width="0.18">Угол: 0 град</text>
<text x="254.7" y="695.6" font-size="7.6" fill="#333" text-anchor="start" font-weight="normal"  stroke="#333" stroke-width="0.18">русский</text>
<rect x="296.5" y="689.5" width="8" height="7" fill="#fff" stroke="#666" stroke-width=".9"/><rect x="297" y="688" width="3" height="3" fill="#666"/><path d="M298.5 692.5 v3 M300.5 693.5 v2 M302.5 692.5 v3" stroke="#666" stroke-width=".8"/>
<path d="M1112.5 689.5 h8 M1113.5 689.5 v4.5 h6 v-4.5 M1116.5 694 v2.5 M1114.5 697 h4" fill="none" stroke="#555" stroke-width=".9"/>
<line x1="1133" y1="692.5" x2="1136.6" y2="692.5" stroke="#444" stroke-width="1.2" />
<line x1="1139.5" y1="692.5" x2="1206" y2="692.5" stroke="#c6c6c6" stroke-width="1.5" />
<rect x="1162" y="689" width="3.3" height="8" fill="#555" />
<line x1="1173" y1="690.5" x2="1173" y2="694.5" stroke="#bbb" stroke-width="1" />
<path d="M1208 692.5 h4.6 M1210.3 690.2 v4.6" stroke="#444" stroke-width="1.1"/>
<text x="1220.5" y="695.5" font-size="7.6" fill="#333" text-anchor="start" font-weight="normal"  stroke="#333" stroke-width="0.18">74 %</text>
<path d="M1264.5 689.5 h3.5 v3 h-3.5z M1270 689.5 h3.5 v3 h-3.5 z M1264.5 694 h3.5 v3 h-3.5z M1270 694 h3.5 v3 h-3.5z" fill="none" stroke="#555" stroke-width=".9"/>
<defs><linearGradient id="tb" x1="0" y1="0" x2="1" y2="0"><stop offset="0" stop-color="#2266b0"/><stop offset=".08" stop-color="#2d82cc"/><stop offset=".35" stop-color="#3690d8"/><stop offset=".6" stop-color="#2179c8"/><stop offset=".72" stop-color="#1d6bbd"/><stop offset=".86" stop-color="#1a52a0"/><stop offset="1" stop-color="#173f7c"/></linearGradient><linearGradient id="tbv" x1="0" y1="0" x2="0" y2="1"><stop offset="0" stop-color="#fff" stop-opacity=".12"/><stop offset=".5" stop-color="#fff" stop-opacity=".03"/><stop offset="1" stop-color="#000" stop-opacity=".08"/></linearGradient><radialGradient id="orb" cx=".5" cy=".35" r=".6"><stop offset="0" stop-color="#7fc4f0"/><stop offset=".6" stop-color="#1f6fb8"/><stop offset="1" stop-color="#0d3f7a"/></radialGradient><linearGradient id="btn" x1="0" y1="0" x2="0" y2="1"><stop offset="0" stop-color="#cfe6f8" stop-opacity=".75"/><stop offset="1" stop-color="#7fb6e6" stop-opacity=".55"/></linearGradient><radialGradient id="og" cx=".4" cy=".35" r=".6"><stop offset="0" stop-color="#ffd070"/><stop offset="1" stop-color="#e0701a"/></radialGradient></defs>
<rect x="0" y="700" width="1280" height="20" fill="url(#tb)" />
<rect x="0" y="700" width="1280" height="20" fill="url(#tbv)" />
<line x1="0" y1="700.5" x2="1280" y2="700.5" stroke="#1b3a60" stroke-width="1" />
<line x1="0" y1="701.5" x2="1280" y2="701.5" stroke="#6aa6dc" stroke-width="1" opacity=".5"/>
<path d="M878 701 h18 l27 19 h-19z" fill="#8cc4f4" opacity=".4"/><path d="M882 701 h9 l25 19 h-8z" fill="#b4dcfc" opacity=".8"/>
<rect x="162.5" y="701.5" width="28.5" height="18" rx="1.5" fill="url(#btn)" stroke="#1d4f86" stroke-width="1"/>
<rect x="284.3" y="701.5" width="28.69999999999999" height="18" rx="1.5" fill="url(#btn)" stroke="#1d4f86" stroke-width="1"/>
<rect x="347.2" y="701.5" width="27.5" height="18" rx="1.5" fill="url(#btn)" stroke="#1d4f86" stroke-width="1"/>
<rect x="376.9" y="701.5" width="27.80000000000001" height="18" rx="1.5" fill="url(#btn)" stroke="#1d4f86" stroke-width="1"/>
<circle cx="18" cy="709.7" r="11.3" fill="url(#orb)" stroke="#8fc3ea" stroke-width=".8"/><path d="M12.5 704.2 q2.5 -1 5 .3 l-.8 4.6 q-2.5 -1.2 -5 -.2z" fill="#f0632b"/><path d="M18.3 704.6 q2.5 1 5.2 .2 l-.8 4.7 q-2.6 .8 -5.2 -.3z" fill="#8ac43f"/><path d="M11.6 709.8 q2.5 -1 5 .2 l-.8 4.7 q-2.5 -1.1 -5 -.2z" fill="#2fa3e8"/><path d="M17.4 710.3 q2.6 1 5.2 .2 l-.8 4.7 q-2.6 .9 -5.2 -.3z" fill="#f8c52a"/>
<rect x="48.8" y="705" width="10.6" height="9.8" rx="1" fill="#fff" stroke="#244f88" stroke-width=".6"/><path d="M50 712 l3 -5.5 v5.5z" fill="#27a040"/><path d="M53.5 706.5 l4.5 6.5 h-4.5z" fill="#d8282a"/>
<rect x="79.7" y="705" width="10.1" height="9.8" rx="1" fill="#c4252b" stroke="#f4d0d0" stroke-width=".8"/><path d="M81.5 713 l6 -6 M85 707 h2.5 v2.5" stroke="#fff" stroke-width="1.1" fill="none"/>
<circle cx="115" cy="709.8" r="5.2" fill="url(#og)"/>
<text x="114.3" y="713.5" font-size="9" fill="#fff" text-anchor="start" font-weight="bold"  stroke="#fff" stroke-width="0.18">2</text>
<rect x="140.8" y="705" width="10" height="9.8" fill="#8cc0ea"/><circle cx="145.8" cy="709.9" r="4.3" fill="#e08a2a"/><path d="M144.4 707.7 l3.2 2.2 -3.2 2.2z" fill="#fff"/>
<path d="M171 706.5 h4 l1 1 h5.5 v6.5 h-10.5z" fill="#f0e2a0" stroke="#c9b060" stroke-width=".6"/><rect x="172.5" y="709.5" width="7.5" height="3" fill="#7fb0d8" opacity=".7"/>
<circle cx="207.5" cy="709.8" r="5.2" fill="#fff"/><path d="M205 706.5 l2.5 3.5 l2.5 -3.5 M207.5 710 v3.8" stroke="#d52b1e" stroke-width="1.4" fill="none"/>
<circle cx="238" cy="709.8" r="5" fill="#dd4b39"/><path d="M238 709.8 l-4.4 2.5 a5 5 0 0 0 7 2 z" fill="#1da462"/><path d="M238 709.8 h5 a5 5 0 0 1 -2.4 4.5z" fill="#ffcd46"/><circle cx="238" cy="709.8" r="2.2" fill="#fff"/><circle cx="238" cy="709.8" r="1.6" fill="#4a8af4"/>
<circle cx="268.3" cy="709.5" r="5.3" fill="#fff"/><circle cx="268.3" cy="709.5" r="4.4" fill="#7d5ab8"/><path d="M266.5 707 q.3 4 3.5 4.8" stroke="#fff" stroke-width="1.2" fill="none"/>
<rect x="293" y="704.5" width="11" height="11" rx="2" fill="#e8883a"/><circle cx="298.5" cy="710" r="3.6" fill="#fff3e0"/>
<rect x="325" y="705" width="8" height="9.8" fill="#8a3a8c"/><rect x="331" y="706.2" width="4.2" height="7.5" fill="#e8d8ea"/>
<text x="325.8" y="713" font-size="7.5" fill="#fff" text-anchor="start" font-weight="bold"  stroke="#fff" stroke-width="0.18">N</text>
<rect x="355.5" y="705" width="8" height="9.8" fill="#3955a3"/><rect x="361.5" y="706" width="4.5" height="8" fill="#fff" stroke="#3955a3" stroke-width=".6"/>
<text x="356" y="713" font-size="7.5" fill="#fff" text-anchor="start" font-weight="bold"  stroke="#fff" stroke-width="0.18">V</text>
<rect x="385.5" y="705.5" width="8" height="9" fill="#2b5797"/><rect x="391.5" y="706.3" width="4.5" height="7.5" fill="#fff" stroke="#2b5797" stroke-width=".6"/>
<text x="385.6" y="712.5" font-size="6.5" fill="#fff" text-anchor="start" font-weight="bold"  stroke="#fff" stroke-width="0.18">W</text>
<text x="1137.5" y="710.8" font-size="8.2" fill="#d0e2f6" text-anchor="start" font-weight="normal" >RU</text>
<path d="M1158.5 711 l2.7 -2.5 2.7 2.5z" fill="#fff"/>
<rect x="1172.5" y="705.5" width="5" height="8.5" fill="none" stroke="#fff" stroke-width=".9"/><path d="M1176 708 h3.5 M1176 710.5 h3.5 M1178 708 v5" stroke="#fff" stroke-width="1"/>
<path d="M1188.5 713.5 h1.2 v-1.5 h-1.2z M1190.8 713.5 h1.2 v-3 h-1.2z M1193.1 713.5 h1.2 v-4.5 h-1.2z M1195.4 713.5 h1.2 v-6.5 h-1.2z" fill="#fff"/><path d="M1197.4 713.5 v-8" stroke="#fff" stroke-width=".5" opacity=".5"/>
<path d="M1204.5 708.3 h2 l3 -2.8 v9.3 l-3 -2.8 h-2z" fill="#fff"/><path d="M1211 707.5 q1.3 2.2 0 4.6 M1212.8 706.3 q2.2 3.4 0 7" stroke="#fff" stroke-width=".8" fill="none"/>
<text transform="translate(1235.6 713) scale(.82 1)" font-size="9.2" fill="#fff">19:56</text>
<rect x="1271" y="701" width="9" height="19" fill="#2a5c9a" stroke="#5f8dc4" stroke-width=".6"/>
<circle cx="1251.2" cy="690.4" r="11.4" fill="#ec3a40"/><path d="M1245 684.5 l12.5 13.5 M1257.5 684.5 l-12.5 13.5" stroke="#fde8e8" stroke-width="1.1"/><path d="M1242.5 686.5 l3.5 -4 1.2 3.2z M1260 686.5 l-3.5 -4 -1.2 3.2z" fill="#fff"/><rect x="1248" y="688" width="6.5" height="5" rx="1.5" fill="#fbe0e0" opacity=".9"/><path d="M1249 690 h1.6 M1252 690 h1.6" stroke="#ec3a40" stroke-width=".9"/>
</svg>
</body></html>
